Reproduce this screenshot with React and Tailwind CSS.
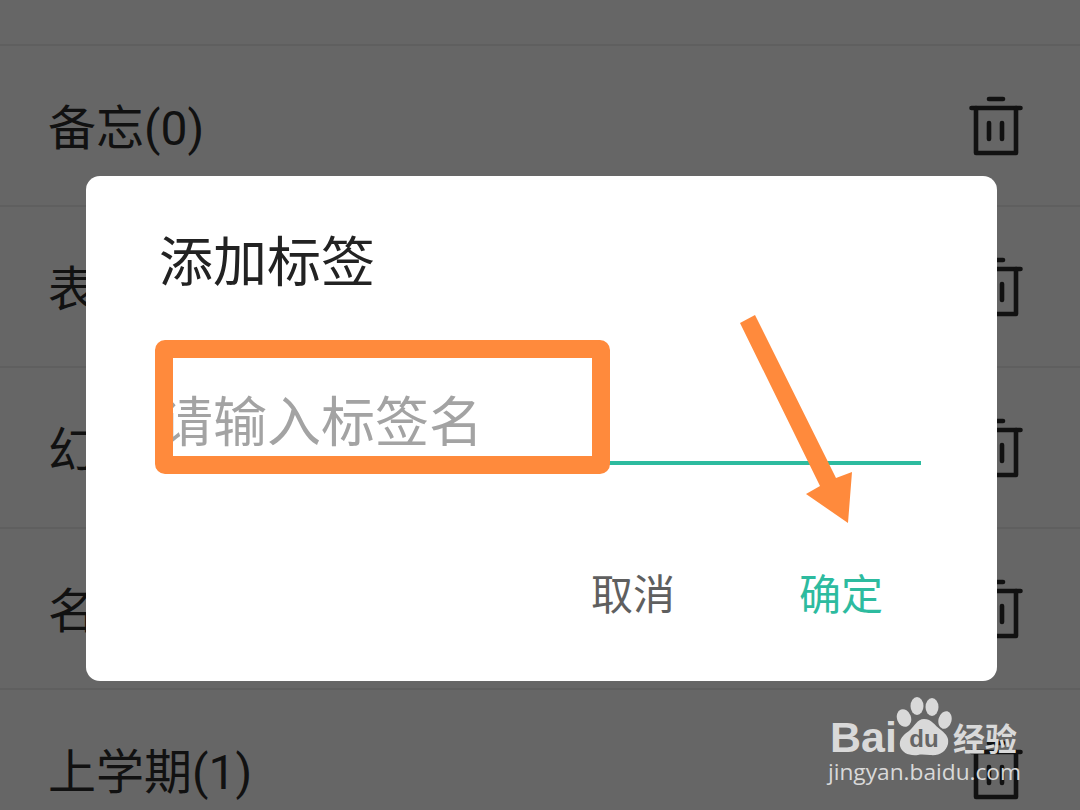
const ROWS = ['备忘(0)', '表格', '幻灯', '名片', '上学期(1)']

const FONT = "font-['Roboto','Noto_Sans_CJK_SC',sans-serif]"

function TrashIcon() {
  return (
    <svg width="56" height="62" viewBox="0 0 56 62" fill="none" stroke="#111" strokeWidth="4.6" strokeLinecap="round" strokeLinejoin="round">
      <path d="M21 4h14" />
      <path d="M3.5 13h49" />
      <path d="M8 13v45h40V13" />
      <path d="M21 28v16" />
      <path d="M34 28v16" />
    </svg>
  )
}

function PawLogo() {
  return (
    <div className="relative w-[58px] h-[60px] shrink-0">
      <svg width="58" height="60" viewBox="0 0 58 60" fill="#d9d9d9">
        <ellipse cx="22" cy="9" rx="6.5" ry="9" />
        <ellipse cx="37" cy="10" rx="6.5" ry="9" />
        <ellipse cx="9" cy="21" rx="7" ry="9" transform="rotate(-20 9 21)" />
        <ellipse cx="50" cy="23" rx="6.5" ry="9" transform="rotate(15 50 23)" />
        <path d="M29 22c8 0 10 6 17 11 6 5 8 8 7 14-2 8-9 12-18 11-4 0-8-1-12 0-9 1-16-2-18-9-1-7 3-11 9-15 6-5 8-12 15-12z" />
      </svg>
      <span className="absolute inset-x-0 bottom-[5px] text-center font-['Liberation_Sans',sans-serif] text-[24px] leading-[26px] font-bold text-[#666666]">du</span>
    </div>
  )
}

function Watermark() {
  return (
    <div className="absolute left-[830px] top-[697px] text-[#d9d9d9]">
      <div className="flex items-end">
        <span className="w-[65px] font-['Liberation_Sans',sans-serif] text-[43px] leading-[40px] font-bold">Bai</span>
        <PawLogo />
        <span className="font-['Noto_Sans_CJK_SC',sans-serif] text-[32px] leading-[40px] font-bold">经验</span>
      </div>
      <div className="-ml-[2px] font-['Open_Sans',sans-serif] text-[22.7px] leading-[30px] whitespace-nowrap">jingyan.baidu.com</div>
    </div>
  )
}

function Arrow() {
  return (
    <svg className="absolute left-[735px] top-[310px]" width="125" height="220" viewBox="0 0 125 220" fill="#ff8a3c">
      <path d="M5 13L20 5L101 168L117 162L113 213L71 184L85 176Z" />
    </svg>
  )
}

export default function App() {
  return (
    <div className={`relative w-[1080px] h-[810px] overflow-hidden bg-[#666666] ${FONT}`}>
      {/* list behind the dialog */}
      <div className="pt-[44px]">
        {ROWS.map((label) => (
          <div key={label} className="h-[161px] border-t-2 border-[#5f5f5f] pl-[48px] pr-[56px] flex items-center justify-between">
            <span className="pt-[6px] text-[48px] text-[#111111]">{label}</span>
            <TrashIcon />
          </div>
        ))}
      </div>

      {/* dialog */}
      <div className="absolute left-[86px] top-[176px] w-[911px] h-[505px] bg-white rounded-[14px] pl-[73px] pr-[76px] pt-[50px]">
        <h2 className="text-[54px] leading-[76px] font-normal text-[#222222]">添加标签</h2>
        <div className="mt-[84px] h-[79px] pt-[1px] border-b-4 border-[#2dbb9f] flex items-center">
          <span className="text-[54px] leading-[70px] text-[#a3a3a3]">请输入标签名</span>
        </div>
        <div className="pt-[101px] flex justify-end gap-[124px] pr-[38px] text-[42px] leading-[60px]">
          <span className="text-[#5f5f5f]">取消</span>
          <span className="text-[#2dbb9f]">确定</span>
        </div>
      </div>

      {/* orange annotations */}
      <div className="absolute left-[155px] top-[340px] w-[455px] h-[134px] border-[18px] border-[#ff8a3c] rounded-[10px]" />
      <Arrow />
      <Watermark />
    </div>
  )
}
